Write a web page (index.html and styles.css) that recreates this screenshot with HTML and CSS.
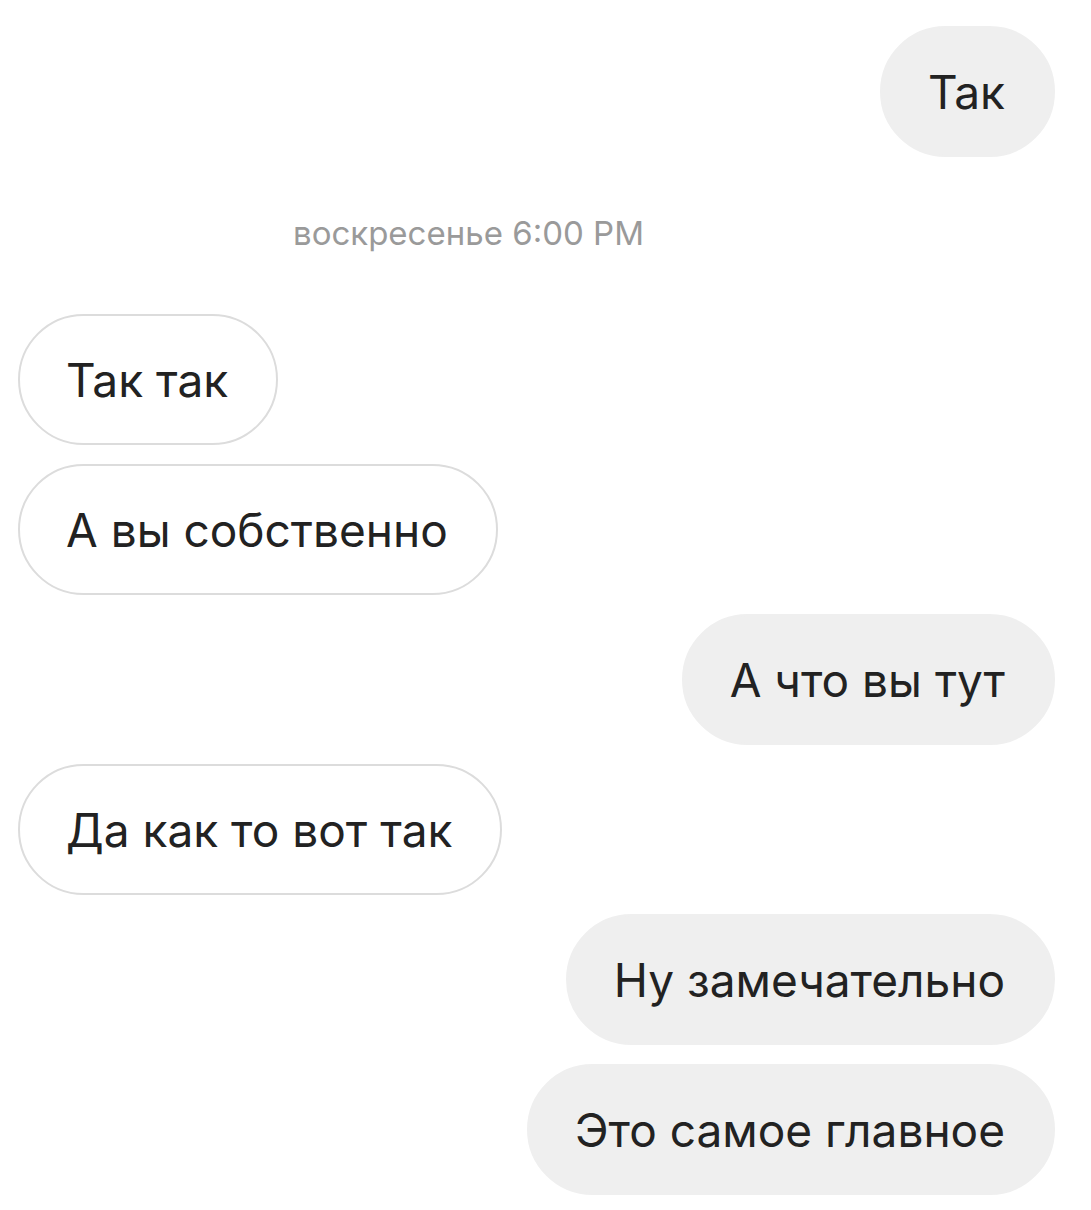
FILE: index.html
```html
<!DOCTYPE html>
<html lang="ru">
<head>
<meta charset="utf-8">
<link rel="stylesheet" href="styles.css">
</head>
<body>
<div class="chat">
  <div class="row out"><div class="bubble sent">Так</div></div>
  <div class="stamp">воскресенье 6:00 PM</div>
  <div class="row in"><div class="bubble recv">Так так</div></div>
  <div class="row in"><div class="bubble recv">А вы собственно</div></div>
  <div class="row out"><div class="bubble sent">А что вы тут</div></div>
  <div class="row in"><div class="bubble recv">Да как то вот так</div></div>
  <div class="row out"><div class="bubble sent">Ну замечательно</div></div>
  <div class="row out"><div class="bubble sent">Это самое главное</div></div>
</div>
</body>
</html>
```
FILE: styles.css
```css
html, body {
  margin: 0;
  padding: 0;
  background: #ffffff;
}
.chat {
  font-family: Inter, "Noto Sans", "Liberation Sans", sans-serif;
  padding: 26px 36px 15px 18px;
  display: flex;
  flex-direction: column;
  gap: 19px;
}
.row {
  display: flex;
}
.row.out { justify-content: flex-end; }
.row.in { justify-content: flex-start; }
.bubble {
  box-sizing: border-box;
  height: 131px;
  border-radius: 66px;
  padding: 0 48px 0 46px;
  display: flex;
  align-items: center;
  font-size: 46px;
  color: #222222;
  white-space: nowrap;
}
.sent {
  background: #efefef;
  border: 2px solid #efefef;
}
.recv {
  background: #ffffff;
  border: 2.5px solid #dcdcdc;
}
.stamp {
  margin: 37px 0 42px 275px;
  font-size: 33px;
  line-height: 40px;
  color: #9a9a9a;
}
```
